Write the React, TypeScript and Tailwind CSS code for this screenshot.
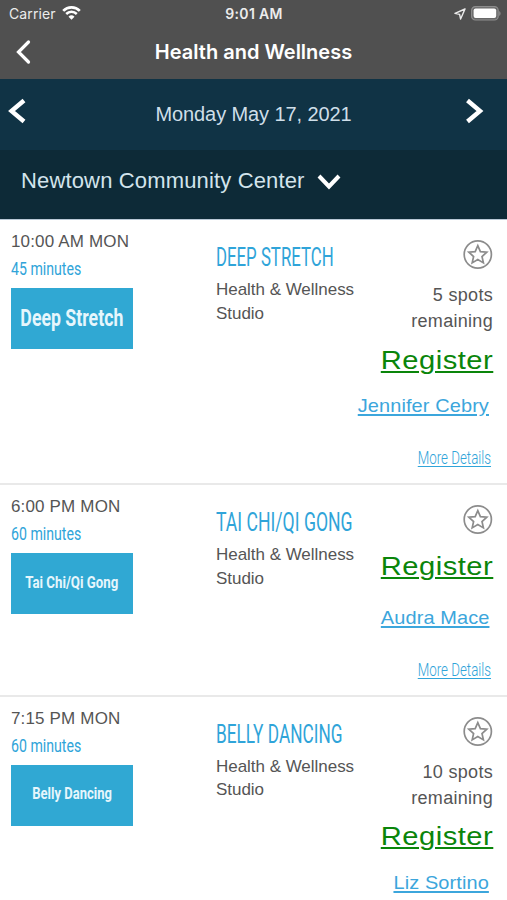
import React from "react";

interface ClassItem {
  id: number;
  time: string;
  duration: string;
  title: string;
  label: string;
  labelClass: string;
  titleClass: string;
  spots?: string;
  instructor: string;
  hasDetails: boolean;
}

const classes: ClassItem[] = [
  {
    id: 1,
    time: "10:00 AM MON",
    duration: "45 minutes",
    title: "DEEP STRETCH",
    label: "Deep Stretch",
    labelClass: "text-[23px] scale-x-[0.77] mt-[1px]",
    titleClass: "scale-x-[0.672]",
    spots: "5 spots",
    instructor: "Jennifer Cebry",
    hasDetails: true,
  },
  {
    id: 2,
    time: "6:00 PM MON",
    duration: "60 minutes",
    title: "TAI CHI/QI GONG",
    label: "Tai Chi/Qi Gong",
    labelClass: "text-[17px] scale-x-[0.78] -mt-[2px]",
    titleClass: "scale-x-[0.705]",
    instructor: "Audra Mace",
    hasDetails: true,
  },
  {
    id: 3,
    time: "7:15 PM MON",
    duration: "60 minutes",
    title: "BELLY DANCING",
    label: "Belly Dancing",
    labelClass: "text-[17px] scale-x-[0.765] -mt-[2px]",
    titleClass: "scale-x-[0.69]",
    spots: "10 spots",
    instructor: "Liz Sortino",
    hasDetails: false,
  },
];

const StatusBar: React.FC = () => (
  <div className="grid h-[27px] grid-cols-3 items-center text-[#ececec]">
    <div className="flex items-center gap-[6px] pl-[9px]">
      <span className="font-['Inter'] text-[14px] leading-none tracking-[0.1px]">
        Carrier
      </span>
      <svg width="19" height="14" viewBox="0 0 19 14" fill="none" className="-mt-[2px]">
        <path d="M1.2 4.9a11.7 11.7 0 0 1 16.6 0" stroke="white" strokeWidth="2.7" />
        <path d="M4.2 8a7.5 7.5 0 0 1 10.6 0" stroke="white" strokeWidth="2.5" />
        <path d="M9.5 13.8 6.5 10.8a4.3 4.3 0 0 1 6 0Z" fill="white" />
      </svg>
    </div>
    <span className="pl-[1px] text-center font-['Inter'] text-[14px] leading-none font-semibold tracking-[0.3px]">
      9:01 AM
    </span>
    <div className="flex items-center justify-end gap-[5px] pr-[6px]">
      <svg width="12" height="12" viewBox="0 0 12 12" fill="none">
        <path
          d="M11 1 1 5.4l4.6 1 1 4.6Z"
          stroke="#ececec"
          strokeWidth="1.4"
          strokeLinejoin="round"
        />
      </svg>
      <svg width="30" height="15" viewBox="0 0 30 15">
        <rect x="0.6" y="0.6" width="26.6" height="13.4" rx="3.8" fill="#686868" stroke="#8d8d8d" strokeWidth="1.2" />
        <rect x="2.6" y="2.6" width="22.6" height="9.4" rx="2" fill="white" />
        <path d="M28.2 5v5c1.8-.8 1.8-4.2 0-5Z" fill="#8d8d8d" />
      </svg>
    </div>
  </div>
);

const StarButton: React.FC = () => (
  <button type="button" aria-label="Favorite" className="block">
    <svg width="30" height="30" viewBox="0 0 30 30" fill="none" stroke="#8c8c8c">
      <circle cx="14.8" cy="14.5" r="13.6" strokeWidth="1.7" />
      <path
        d="M14.8 5.6l2.6 6 6.4.6-4.8 4.3 1.4 6.4-5.6-3.3-5.6 3.3 1.4-6.4-4.8-4.3 6.4-.6Z"
        strokeWidth="1.7"
      />
    </svg>
  </button>
);

const ClassRow: React.FC<{ item: ClassItem }> = ({ item }) => (
  <div className="flex border-b-2 border-[#e9e9e9] pb-[13px] text-[#555] last:border-b-0">
    <div className="w-[216px] shrink-0 pt-[11px] pl-[11px]">
      <p className="text-[17px] leading-[22px] tracking-[0.16px]">{item.time}</p>
      <p className="mt-[4px] origin-left scale-x-[0.785] font-['Roboto'] text-[18px] leading-[24px] text-[#2fa4d9]">
        {item.duration}
      </p>
      <div className="mt-[7px] flex h-[61px] w-[122px] items-center justify-center bg-[#30a8d3] font-['Roboto'] font-bold whitespace-nowrap text-[#e6f6fc]">
        <span className={item.labelClass}>{item.label}</span>
      </div>
    </div>
    <div className="w-[150px] shrink-0 pt-[23px]">
      <h3
        className={`origin-left font-['Roboto'] text-[25px] leading-[30px] whitespace-nowrap text-[#2fa4d9] ${item.titleClass}`}
      >
        {item.title}
      </h3>
      <p className="mt-[5px] text-[17px] leading-[23.5px] tracking-[-0.03px]">
        Health &amp; Wellness
        <br />
        Studio
      </p>
    </div>
    <div className="-ml-[20px] flex flex-1 flex-col items-end pt-[20px] pr-[14px]">
      <StarButton />
      {item.spots && (
        <p className="-mb-[6px] pt-[12px] text-right text-[18px] leading-[26px] tracking-[0.3px]">
          {item.spots}
          <br />
          remaining
        </p>
      )}
      <a
        className={`origin-right scale-x-[1.1] text-[26.5px] leading-[36px] tracking-[0.45px] text-[#0a850a] underline decoration-2 underline-offset-2 ${
          item.spots ? "mt-[13.5px] mb-[16.5px]" : "mt-[13px] mb-[21.5px]"
        }`}
      >
        Register
      </a>
      <a className="mr-[4px] origin-right scale-x-[1.05] text-[19px] leading-[24px] tracking-[0.1px] whitespace-nowrap text-[#3ca6dc] underline decoration-[1.5px] underline-offset-2">
        {item.instructor}
      </a>
      {item.hasDetails && (
        <a className="mt-[28px] mr-[2px] origin-right scale-x-[0.74] font-['Roboto'] text-[18px] leading-[24px] font-light text-[#2fa4d9] underline underline-offset-2">
          More Details
        </a>
      )}
    </div>
  </div>
);

const App: React.FC = () => {
  return (
    <div className="h-[900px] w-[507px] overflow-hidden bg-white font-['Liberation_Sans',Arial,sans-serif]">
      <header className="h-[79px] bg-[#505050]">
        <StatusBar />
        <div className="grid h-[50px] grid-cols-[60px_1fr_60px] items-center">
          <svg width="18" height="26" viewBox="0 0 18 26" fill="none" className="ml-[15px]">
            <path d="M13.5 3 3.5 13l10 10" stroke="white" strokeWidth="3.2" strokeLinecap="round" />
          </svg>
          <h1 className="text-center font-['Inter'] text-[20px] font-semibold text-white">
            Health and Wellness
          </h1>
        </div>
      </header>

      <div className="grid h-[71px] grid-cols-[60px_1fr_60px] items-center bg-[#103345]">
        <svg width="20" height="26" viewBox="0 0 20 26" fill="none" className="-mt-[7px] ml-[7px]">
          <path d="M17 2.5 4.5 13 17 23.5" stroke="white" strokeWidth="4.4" />
        </svg>
        <span className="-mt-[2px] text-center text-[20px] tracking-[-0.1px] text-[#cfdfe9]">
          Monday May 17, 2021
        </span>
        <svg width="20" height="26" viewBox="0 0 20 26" fill="none" className="-mt-[7px] ml-[18px]">
          <path d="M2.5 2.5 15 13 2.5 23.5" stroke="white" strokeWidth="4.4" />
        </svg>
      </div>

      <div className="flex h-[70px] items-center gap-[12px] border-b border-[#b9c8d6] bg-[#0d2a37] pb-[8px] pl-[21px]">
        <span className="text-[22px] tracking-[0.15px] text-[#d3e4ec]">
          Newtown Community Center
        </span>
        <svg width="24" height="18" viewBox="0 0 24 18" fill="none" className="mt-[2px]">
          <path d="M2 3 12 13.5 22 3" stroke="white" strokeWidth="4" />
        </svg>
      </div>

      <div>
        {classes.map((item) => (
          <ClassRow key={item.id} item={item} />
        ))}
      </div>
    </div>
  );
};

export default App;
